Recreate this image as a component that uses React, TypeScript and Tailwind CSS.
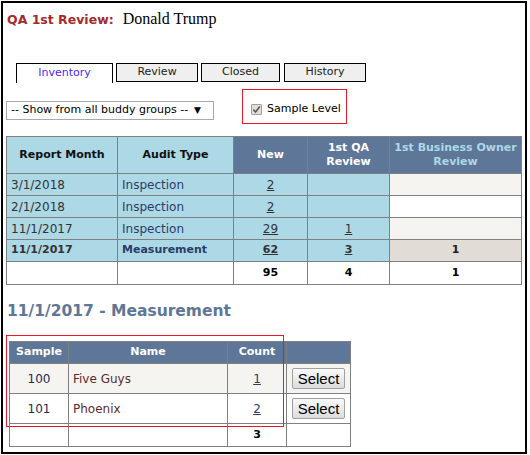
import React from 'react';

const font = { fontFamily: '"DejaVu Sans", Verdana, sans-serif' };

// Report rows for the inventory grid
const rows = [
    { month: '3/1/2018', type: 'Inspection', nw: '2', qa: '', bo: '', bold: false, boBg: 'bg-[#f5f4f0]' },
    { month: '2/1/2018', type: 'Inspection', nw: '2', qa: '', bo: '', bold: false, boBg: 'bg-white' },
    { month: '11/1/2017', type: 'Inspection', nw: '29', qa: '1', bo: '', bold: false, boBg: 'bg-[#f5f4f0]' },
    { month: '11/1/2017', type: 'Measurement', nw: '62', qa: '3', bo: '1', bold: true, boBg: 'bg-[#e1dcd6]' },
];

const samples = [
    { id: '100', name: 'Five Guys', count: '1', bg: 'bg-[#f5f4f0]' },
    { id: '101', name: 'Phoenix', count: '2', bg: 'bg-white' },
];

const Tab: React.FC<{ label: string; width: string; active?: boolean }> = ({ label, width, active }) => (
    <div
        className={`${width} flex items-center justify-center text-[11px] border border-black ${
            active ? 'bg-white border-b-0 h-[20px] text-[#4b28ff]' : 'h-[19px] bg-[#efefef] text-[#222]'
        }`}
    >
        {label}
    </div>
);

const SelectButton = () => (
    <button
        type="button"
        className="w-[53px] h-[21px] rounded-[2px] border border-[#a0a0a0] bg-gradient-to-b from-[#fafafa] to-[#dcdcdc] text-[15px] leading-none text-black"
        style={{ fontFamily: '"Liberation Sans", Arial, sans-serif' }}
    >
        Select
    </button>
);

export default function App() {
    const cell = 'border border-[#808080] px-[4px]';
    return (
        <div className="w-[530px] h-[455px] bg-white p-[1px]" style={font}>
            <div className="relative w-[526px] h-[453px] border-2 border-black pl-[3px] pt-[4px]">
                {/* Title */}
                <div className="flex items-baseline h-[22px] ml-[1px]">
                    <span className="text-[12.5px] font-bold text-[#a52a2a]">QA 1st Review:</span>
                    <span className="ml-[9px] text-[16px] text-black" style={{ fontFamily: '"Liberation Serif", "Times New Roman", serif' }}>
                        Donald Trump
                    </span>
                </div>

                {/* Tabs */}
                <div className="flex items-start gap-[3px] ml-[10px] mt-[34px] h-[20px]">
                    <Tab label="Inventory" width="w-[97px]" active />
                    <Tab label="Review" width="w-[82px]" />
                    <Tab label="Closed" width="w-[79px]" />
                    <div className="ml-[1px]">
                        <Tab label="History" width="w-[82px]" />
                    </div>
                </div>

                {/* Filters */}
                <div className="flex items-start mt-[6px] h-[36px]">
                    <div className="mt-[12px] w-[208px] h-[19px] border border-[#a9a9a9] flex items-center pl-[4px] text-[11px] text-black whitespace-nowrap">
                        -- Show from all buddy groups --<span className="ml-[6px] text-[9px]">▼</span>
                    </div>
                    <div className="ml-[28px] w-[105px] h-[35px] border border-[#e8192c] flex items-center pl-[8px] pt-[6px] text-[11px] text-black whitespace-nowrap">
                        <span className="w-[11px] h-[11px] border border-[#a0a0a0] bg-[#dedede] flex items-center justify-center rounded-[1px]">
                            <svg viewBox="0 0 10 10" className="w-[9px] h-[9px]">
                                <path d="M1.5 5.2 L4 7.8 L8.7 1.8" fill="none" stroke="#5a5a5a" strokeWidth="1.8" />
                            </svg>
                        </span>
                        <span className="ml-[5px]">Sample Level</span>
                    </div>
                </div>

                {/* Inventory table */}
                <table className="mt-[11px] border-collapse w-[516px] text-[12px]">
                    <thead>
                        <tr className="h-[37px] font-bold text-[11px]">
                            <th className={`${cell} w-[111px] bg-[#add8e6] text-[#111]`}>Report Month</th>
                            <th className={`${cell} w-[116px] bg-[#add8e6] text-[#111]`}>Audit Type</th>
                            <th className={`${cell} w-[74px] bg-[#5e7698] text-white`}>New</th>
                            <th className={`${cell} w-[82px] bg-[#5e7698] text-white leading-[14px]`}>1st QA<br />Review</th>
                            <th className={`${cell} bg-[#5e7698] text-[#add8e6] leading-[14px]`}>1st Business Owner<br />Review</th>
                        </tr>
                    </thead>
                    <tbody>
                        {rows.map((r, i) => (
                            <tr key={i} className={`h-[22px] ${r.bold ? 'font-bold text-[11px]' : ''}`}>
                                <td className={`${cell} bg-[#add8e6] text-[#333]`}>{r.month}</td>
                                <td className={`${cell} bg-[#add8e6] text-[#2b3c66]`}>{r.type}</td>
                                <td className={`${cell} bg-[#add8e6] text-center`}>
                                    <span className="underline text-[#333]">{r.nw}</span>
                                </td>
                                <td className={`${cell} bg-[#add8e6] text-center`}>
                                    {r.qa && <span className="underline text-[#333]">{r.qa}</span>}
                                </td>
                                <td className={`${cell} ${r.boBg} text-center text-[#222]`}>{r.bo}</td>
                            </tr>
                        ))}
                        <tr className="h-[23px] font-bold text-[11px] text-black">
                            <td className={cell}></td>
                            <td className={cell}></td>
                            <td className={`${cell} text-center`}>95</td>
                            <td className={`${cell} text-center`}>4</td>
                            <td className={`${cell} text-center`}>1</td>
                        </tr>
                    </tbody>
                </table>

                {/* Detail heading */}
                <div className="mt-[16px] ml-[1px] text-[15.5px] font-bold text-[#5e7698] h-[20px] leading-[20px]">
                    11/1/2017 - Measurement
                </div>

                {/* Sample table */}
                <table className="mt-[20px] ml-[3px] border-collapse w-[342px] text-[12px]">
                    <thead>
                        <tr className="h-[22px] bg-[#5e7698] text-white font-bold text-[11px]">
                            <th className={`${cell} w-[59px]`}>Sample</th>
                            <th className={`${cell} w-[159px]`}>Name</th>
                            <th className={`${cell} w-[59px]`}>Count</th>
                            <th className={cell}></th>
                        </tr>
                    </thead>
                    <tbody>
                        {samples.map((s) => (
                            <tr key={s.id} className={`h-[30px] ${s.bg}`}>
                                <td className={`${cell} text-center text-[#1f2b55]`}>{s.id}</td>
                                <td className={`${cell} text-[#5a2a30]`}>{s.name}</td>
                                <td className={`${cell} text-center`}>
                                    <span className="underline text-[#2b3c66]">{s.count}</span>
                                </td>
                                <td className={`${cell} text-center`}>
                                    <SelectButton />
                                </td>
                            </tr>
                        ))}
                        <tr className="h-[23px]">
                            <td className={cell}></td>
                            <td className={cell}></td>
                            <td className={`${cell} text-center font-bold text-[11px] text-black`}>3</td>
                            <td className={cell}></td>
                        </tr>
                    </tbody>
                </table>

                {/* Annotation box over the sample table */}
                <div className="absolute left-[3px] top-[332px] w-[278px] h-[92px] border border-[#e8192c] pointer-events-none"></div>
            </div>
        </div>
    );
}
